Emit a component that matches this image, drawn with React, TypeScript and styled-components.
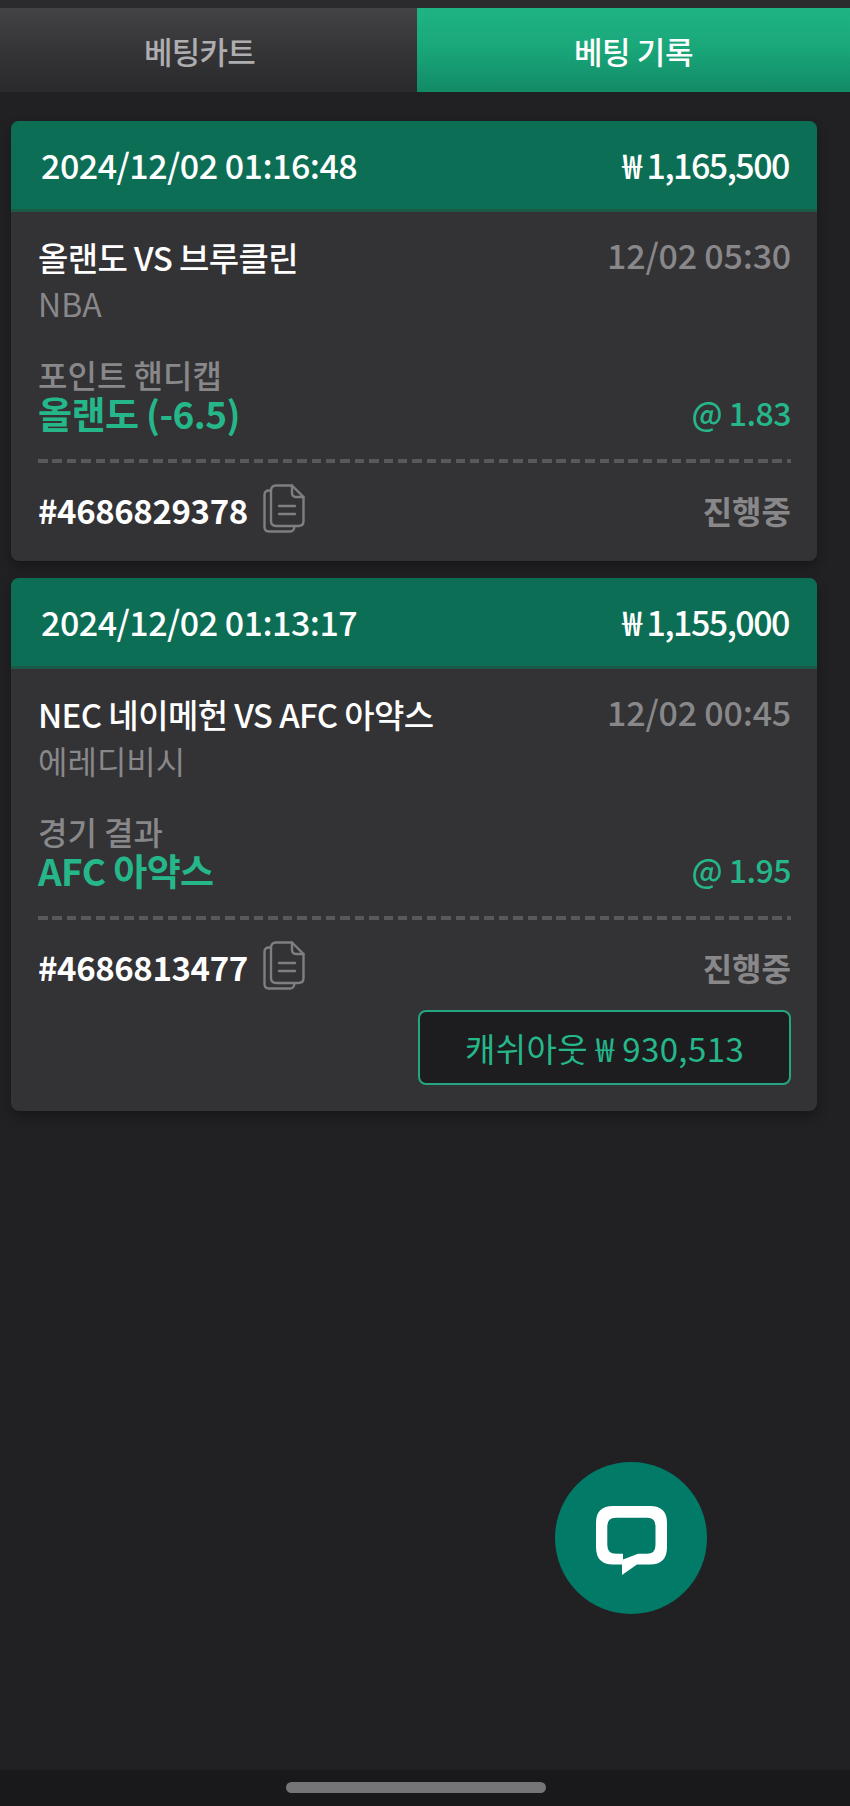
import React from "react";
import styled, { createGlobalStyle } from "styled-components";

const Global = createGlobalStyle`
  html, body { margin: 0; padding: 0; background: #212123; }
  #root { width: 850px; height: 1806px; }
  * { box-sizing: border-box; }
`;

const Page = styled.div`
  position: relative;
  width: 850px;
  height: 1806px;
  display: flex;
  flex-direction: column;
  background: #212123;
  font-family: "Noto Sans CJK KR", "Noto Sans", sans-serif;
  overflow: hidden;
`;

const StatusStrip = styled.div`
  height: 8px;
  background: #2b2b2d;
`;

const Tabs = styled.div`
  display: grid;
  grid-template-columns: 417px 433px;
  height: 84px;
`;

const Tab = styled.div<{ $active?: boolean }>`
  display: flex;
  align-items: center;
  justify-content: center;
  padding-right: ${(p) => (p.$active ? "0" : "18px")};
  font-size: 31px;
  font-weight: 500;
  letter-spacing: ${(p) => (p.$active ? "-0.4px" : "-0.8px")};
  color: ${(p) => (p.$active ? "#ffffff" : "#aeaeb0")};
  background: ${(p) =>
    p.$active
      ? "linear-gradient(180deg, #1fb383 0%, #1aa87b 45%, #128a65 100%)"
      : "linear-gradient(180deg, #434345 0%, #353537 50%, #2a2a2c 100%)"};
`;

const List = styled.div`
  display: flex;
  flex-direction: column;
  gap: 17px;
  padding: 29px 33px 0 11px;
`;

const Card = styled.section`
  border-radius: 8px;
  background: #333235;
  box-shadow: 0 6px 12px rgba(0, 0, 0, 0.3);
  overflow: hidden;
`;

const CardHeader = styled.header`
  display: flex;
  align-items: center;
  justify-content: space-between;
  height: 91px;
  padding: 0 28px 1px 30px;
  background: #0c6e55;
  border-bottom: 3px solid #1a5a47;
  color: #ffffff;
  font-size: 34px;
  font-weight: 500;
  letter-spacing: -0.5px;
`;

const Stake = styled.span`
  letter-spacing: -1.5px;
`;

const CardBody = styled.div`
  padding: 23px 26px 18px 27px;
`;

const Row = styled.div`
  display: flex;
  justify-content: space-between;
  align-items: center;
`;

const Match = styled.div`
  font-size: 33px;
  font-weight: 500;
  line-height: 44px;
  letter-spacing: -0.6px;
  color: #ffffff;
`;

const Kickoff = styled.div`
  padding-bottom: 4px;
  font-size: 34px;
  font-weight: 500;
  line-height: 40px;
  letter-spacing: -0.2px;
  color: #88888a;
`;

const League = styled.div`
  margin-top: 2px;
  font-size: 32px;
  font-weight: 400;
  line-height: 44px;
  color: #88888a;
`;

const Market = styled.div`
  margin-top: 30px;
  font-size: 32px;
  font-weight: 500;
  line-height: 38px;
  color: #88888a;
`;

const Pick = styled.div`
  padding-bottom: 4px;
  font-size: 37px;
  font-weight: 700;
  line-height: 40px;
  letter-spacing: -0.6px;
  color: #25b78a;
`;

const Odds = styled.div`
  padding-bottom: 6px;
  font-size: 32px;
  font-weight: 500;
  line-height: 38px;
  letter-spacing: -0.5px;
  color: #25b78a;
`;

const Dashed = styled.hr`
  height: 4px;
  margin: 22px 0 0;
  border: 0;
  background: repeating-linear-gradient(90deg, #59595b 0 9.5px, transparent 9.5px 14.4px);
`;

const Footer = styled(Row)`
  margin-top: 20px;
  height: 60px;
  padding-bottom: 6px;
`;

const IdGroup = styled.div`
  display: flex;
  align-items: center;
  gap: 15px;
`;

const BetId = styled.div`
  font-size: 33px;
  font-weight: 700;
  letter-spacing: -0.4px;
  color: #ffffff;
`;

const Status = styled.div`
  font-size: 32px;
  font-weight: 700;
  color: #88888a;
`;

const CashoutRow = styled.div`
  display: flex;
  justify-content: flex-end;
  margin: 10px 0 8px;
`;

const Cashout = styled.button`
  width: 373px;
  height: 75px;
  border: 2px solid #25a581;
  border-radius: 8px;
  background: #1d1d1f;
  color: #25b78a;
  font-family: inherit;
  font-size: 33px;
  font-weight: 400;
  letter-spacing: 0.4px;
`;

const ChatButton = styled.div`
  position: absolute;
  left: 555px;
  top: 1462px;
  width: 152px;
  height: 152px;
  border-radius: 50%;
  background: #027a68;
  display: flex;
  align-items: center;
  justify-content: center;
`;

const NavBar = styled.div`
  position: absolute;
  left: 0;
  right: 0;
  top: 1770px;
  height: 36px;
  background: #19191b;
  padding: 12px 0 0 286px;
`;

const Pill = styled.div`
  width: 260px;
  height: 11px;
  border-radius: 6px;
  background: #757577;
`;

const CopyGlyph = styled.svg`
  margin-bottom: 4px;
`;

const CopyIcon = () => (
  <CopyGlyph width="42" height="49" viewBox="0 0 42 49" fill="none" stroke="#7f7f81" strokeWidth="2.4" strokeLinejoin="round" strokeLinecap="round">
    <path d="M8 6.5 H6 Q1.5 6.5 1.5 11 V43 Q1.5 47.5 6 47.5 H27 Q31 47.5 31.5 42.5" />
    <path d="M13 1.5 H29 L40.5 13 V37 Q40.5 42 35.5 42 H13 Q8 42 8 37 V6.5 Q8 1.5 13 1.5 Z" />
    <path d="M29 1.5 V9 Q29 13 33 13 H40.5" />
    <path d="M16 22 H32 M16 30 H32" />
  </CopyGlyph>
);

const ChatGlyph = styled.svg`
  margin-top: 5px;
`;

const ChatIcon = () => (
  <ChatGlyph width="71" height="70" viewBox="0 0 71 70">
    <path
      fill="#ffffff"
      fillRule="evenodd"
      d="M17 0 H54 Q71 0 71 17 V41 Q71 58.6 54 58.6 H41 L26 69 V58.6 H17 Q0 58.6 0 41 V17 Q0 0 17 0 Z M20 11.7 Q11.3 11.7 11.3 20 V39 Q11.3 47.7 20 47.7 H27 V53.5 L42 47.7 H51 Q59.5 47.7 59.5 39 V20 Q59.5 11.7 51 11.7 Z"
    />
  </ChatGlyph>
);

type Bet = {
  placed: string;
  stake: string;
  match: string;
  kickoff: string;
  league: string;
  market: string;
  pick: string;
  odds: string;
  id: string;
  cashout?: string;
};

const bets: Bet[] = [
  {
    placed: "2024/12/02 01:16:48",
    stake: "₩ 1,165,500",
    match: "올랜도 VS 브루클린",
    kickoff: "12/02 05:30",
    league: "NBA",
    market: "포인트 핸디캡",
    pick: "올랜도 (-6.5)",
    odds: "@ 1.83",
    id: "#4686829378",
  },
  {
    placed: "2024/12/02 01:13:17",
    stake: "₩ 1,155,000",
    match: "NEC 네이메헌 VS AFC 아약스",
    kickoff: "12/02 00:45",
    league: "에레디비시",
    market: "경기 결과",
    pick: "AFC 아약스",
    odds: "@ 1.95",
    id: "#4686813477",
    cashout: "캐쉬아웃 ₩ 930,513",
  },
];

export default function App() {
  return (
    <Page>
      <Global />
      <StatusStrip />
      <Tabs>
        <Tab>베팅카트</Tab>
        <Tab $active>베팅 기록</Tab>
      </Tabs>
      <List>
        {bets.map((b) => (
          <Card key={b.id}>
            <CardHeader>
              <span>{b.placed}</span>
              <Stake>{b.stake}</Stake>
            </CardHeader>
            <CardBody>
              <Row>
                <Match>{b.match}</Match>
                <Kickoff>{b.kickoff}</Kickoff>
              </Row>
              <League>{b.league}</League>
              <Market>{b.market}</Market>
              <Row>
                <Pick>{b.pick}</Pick>
                <Odds>{b.odds}</Odds>
              </Row>
              <Dashed />
              <Footer>
                <IdGroup>
                  <BetId>{b.id}</BetId>
                  <CopyIcon />
                </IdGroup>
                <Status>진행중</Status>
              </Footer>
              {b.cashout && (
                <CashoutRow>
                  <Cashout>{b.cashout}</Cashout>
                </CashoutRow>
              )}
            </CardBody>
          </Card>
        ))}
      </List>
      <ChatButton>
        <ChatIcon />
      </ChatButton>
      <NavBar>
        <Pill />
      </NavBar>
    </Page>
  );
}
